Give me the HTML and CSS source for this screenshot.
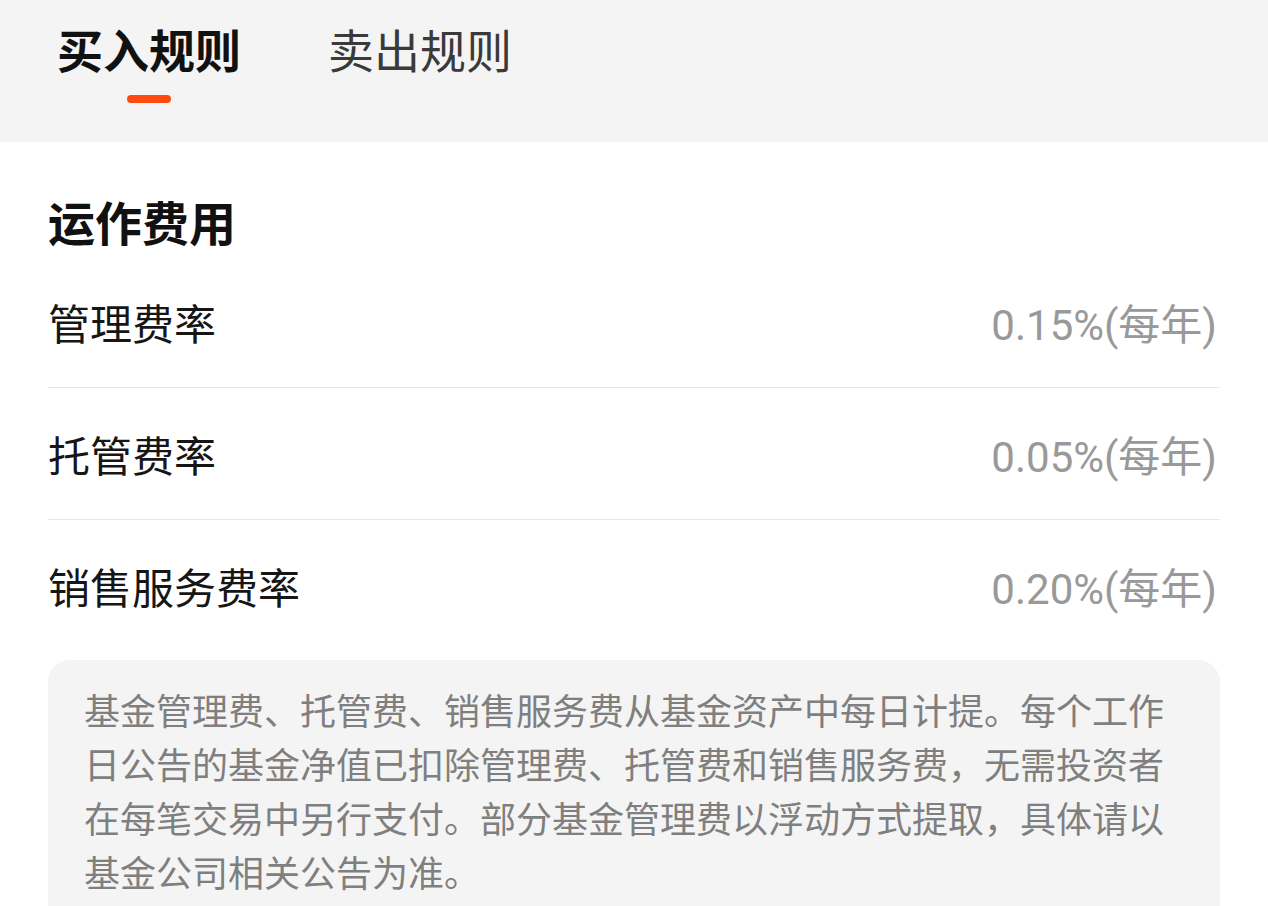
FILE: index.html
```html
<!DOCTYPE html>
<html lang="zh-CN">
<head>
  <meta charset="UTF-8">
  <meta name="viewport" content="width=device-width, initial-scale=1.0">
  <title>运作费用</title>
  <link rel="stylesheet" href="styles.css">
</head>
<body>

<div class="tabs">
  <div class="tab active">买入规则</div>
  <div class="tab">卖出规则</div>
</div>

<div class="content">
  <h2 class="section-title">运作费用</h2>

  <ul class="fee-list">
    <li class="fee-row">
      <span class="fee-name">管理费率</span>
      <span class="fee-value">0.15%(每年)</span>
    </li>
    <li class="fee-row">
      <span class="fee-name">托管费率</span>
      <span class="fee-value">0.05%(每年)</span>
    </li>
    <li class="fee-row">
      <span class="fee-name">销售服务费率</span>
      <span class="fee-value">0.20%(每年)</span>
    </li>
  </ul>

  <div class="note">
    基金管理费、托管费、销售服务费从基金资产中每日计提。每个工作日公告的基金净值已扣除管理费、托管费和销售服务费，无需投资者在每笔交易中另行支付。部分基金管理费以浮动方式提取，具体请以基金公司相关公告为准。
  </div>
</div>

</body>
</html>
```

FILE: styles.css
```css
body {
  margin: 0;
  font-family: "Noto Sans CJK SC", "Noto Sans", sans-serif;
  background: #fff;
  color: #111;
}
.tabs {
  display: flex;
  gap: 87px;
  height: 142px;
  box-sizing: border-box;
  padding: 24px 0 0 57px;
  background: #f4f4f4;
}
.tab {
  font-size: 46px;
  line-height: 48px;
  color: #3a3a3a;
}
.tab.active {
  font-weight: bold;
  color: #111;
  display: flex;
  flex-direction: column;
  align-items: center;
}
.tab.active::after {
  content: "";
  width: 44px;
  height: 8px;
  margin-top: 23px;
  border-radius: 4px;
  background: #ff4a10;
}
.content {
  padding: 0 48px;
}
.section-title {
  margin: 55px 0 0;
  font-size: 47px;
  line-height: 48px;
  font-weight: bold;
}
.fee-list {
  list-style: none;
  margin: 11px 0 0;
  padding: 0;
}
.fee-row {
  display: flex;
  justify-content: space-between;
  align-items: center;
  height: 131px;
  border-bottom: 1px solid #e8e8e8;
  font-size: 42px;
}
.fee-row:last-child {
  border-bottom: none;
}
.fee-name {
  color: #161616;
}
.fee-value {
  font-family: Roboto, "Noto Sans CJK SC", sans-serif;
  font-size: 42px;
  color: #999;
  padding-right: 3px;
}
.note {
  margin-top: 9px;
  padding: 22px 36px 40px 36px;
  background: #f4f4f4;
  border-radius: 22px;
  font-size: 36px;
  line-height: 54px;
  color: #7f7f7f;
}
```
